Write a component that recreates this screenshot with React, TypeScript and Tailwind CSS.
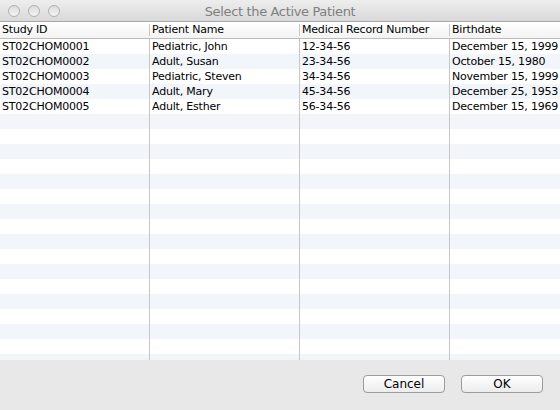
import React from "react";

const rows = [
  ["ST02CHOM0001", "Pediatric, John", "12-34-56", "December 15, 1999"],
  ["ST02CHOM0002", "Adult, Susan", "23-34-56", "October 15, 1980"],
  ["ST02CHOM0003", "Pediatric, Steven", "34-34-56", "November 15, 1999"],
  ["ST02CHOM0004", "Adult, Mary", "45-34-56", "December 25, 1953"],
  ["ST02CHOM0005", "Adult, Esther", "56-34-56", "December 15, 1969"],
];

const headers = ["Study ID", "Patient Name", "Medical Record Number", "Birthdate"];
const font = { fontFamily: '"DejaVu Sans", "Liberation Sans", sans-serif' };

export default function App() {
  const body: string[][] = [];
  for (let i = 0; i < 22; i++) body.push(rows[i] ?? ["", "", "", ""]);
  return (
    <div className="w-[560px] h-[410px] flex flex-col bg-[#e8e8e8] overflow-hidden" style={font}>
      <div className="h-[22px] shrink-0 flex items-center relative bg-gradient-to-b from-[#eeeeee] to-[#d9d9d9] border-b border-[#a8a8a8]">
        <div className="flex gap-[8px] pl-[8px] shrink-0">
          {[0, 1, 2].map((i) => (
            <div key={i} className="w-[12px] h-[12px] rounded-full border border-[#b0b0b0] bg-gradient-to-b from-[#dcdcdc] to-[#f4f4f4]" />
          ))}
        </div>
        <div className="flex-1 text-center text-[13px] tracking-[-0.35px] text-[#7f7f7f] pr-[60px] leading-none pt-[1px]">Select the Active Patient</div>
      </div>
      <div className="h-[338px] shrink-0 flex flex-col bg-white overflow-hidden">
        <div className="h-[17px] shrink-0 flex border-b border-[#bcbcbc] bg-gradient-to-b from-white to-[#f3f3f3] text-[11px] tracking-[-0.2px] text-black">
          {headers.map((h, i) => (
            <div key={i} className={`flex items-center ${i < 3 ? "w-[150px] shrink-0" : "flex-1 min-w-0"}`}>
              <div className="flex-1 min-w-0 px-[2px] whitespace-nowrap overflow-hidden">{h}</div>
              {i < 3 && <div className="w-px h-[12px] bg-[#c8c8c8] shrink-0" />}
            </div>
          ))}
        </div>
        {body.map((r, ri) => (
          <div key={ri} className={`h-[15px] shrink-0 flex text-[11px] tracking-[-0.2px] text-black ${ri % 2 === 1 ? "bg-[#f2f5fa]" : "bg-white"}`}>
            {r.map((c, ci) => (
              <div key={ci} className={`flex items-center ${ci < 3 ? "w-[150px] shrink-0 border-r border-[#c6c6c6]" : "flex-1 min-w-0"}`}>
                <div className="min-w-0 px-[2px] whitespace-nowrap overflow-hidden leading-none">{c}</div>
              </div>
            ))}
          </div>
        ))}
      </div>
      <div className="flex justify-end gap-[16px] pt-[15px] pr-[17px]">
        {["Cancel", "OK"].map((b) => (
          <div key={b} className="w-[82px] h-[18px] rounded-[4px] border border-[#9c9c9c] bg-gradient-to-b from-white to-[#ececec] flex items-center justify-center text-[12px] text-black leading-none">
            {b}
          </div>
        ))}
      </div>
    </div>
  );
}
